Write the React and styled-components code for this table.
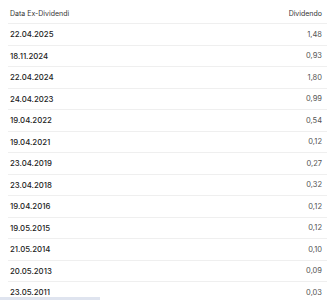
import React from "react";
import styled, { createGlobalStyle } from "styled-components";

const rows = [
  ["22.04.2025", "1,48"],
  ["18.11.2024", "0,93"],
  ["22.04.2024", "1,80"],
  ["24.04.2023", "0,99"],
  ["19.04.2022", "0,54"],
  ["19.04.2021", "0,12"],
  ["23.04.2019", "0,27"],
  ["23.04.2018", "0,32"],
  ["19.04.2016", "0,12"],
  ["19.05.2015", "0,12"],
  ["21.05.2014", "0,10"],
  ["20.05.2013", "0,09"],
  ["23.05.2011", "0,03"],
];

const Global = createGlobalStyle`
  html, body {
    margin: 0;
    background: #fff;
    overflow: hidden;
    font-family: Inter, "Liberation Sans", sans-serif;
  }
`;

const Table = styled.div`
  margin: 0 8px;
  display: flex;
  flex-direction: column;
`;

const Row = styled.div`
  display: flex;
  justify-content: space-between;
  align-items: center;
  height: ${({ $head }) => ($head ? "24px" : "21.5px")};
  padding: ${({ $head }) => ($head ? "4px 5px 0 2px" : "0 5px 0 2px")};
  box-sizing: border-box;
  border-bottom: 1px solid #efefef;
`;

const HeadCell = styled.span`
  font-size: 7px;
  color: #333;
`;

const DateCell = styled.span`
  font-size: 7.8px;
  font-weight: 500;
  color: #222;
`;

const Value = styled.span`
  font-size: 7.5px;
  color: #555;
`;

const ScrollThumb = styled.div`
  position: fixed;
  left: 0;
  bottom: 0;
  width: 100px;
  height: 3px;
  background: #dfe4ef;
`;

export default function App() {
  return (
    <>
      <Global />
      <Table>
        <Row $head>
          <HeadCell>Data Ex-Dividendi</HeadCell>
          <HeadCell>Dividendo</HeadCell>
        </Row>
        {rows.map(([d, v]) => (
          <Row key={d}>
            <DateCell>{d}</DateCell>
            <Value>{v}</Value>
          </Row>
        ))}
      </Table>
      <ScrollThumb />
    </>
  );
}
